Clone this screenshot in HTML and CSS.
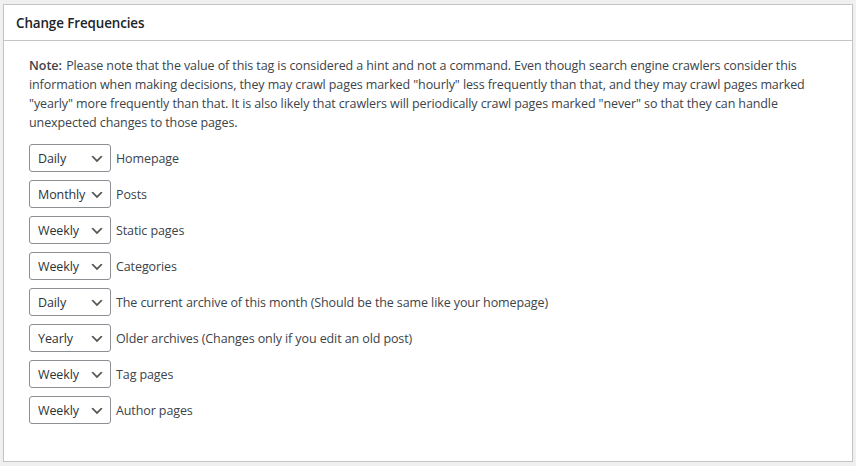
FILE: index.html
```html
<!DOCTYPE html>
<html lang="en">
<head>
<meta charset="utf-8">
<title>Change Frequencies</title>
<link rel="stylesheet" href="styles.css">
</head>
<body>
<div class="postbox">
  <div class="postbox-header"><h2 class="hndle">Change Frequencies</h2></div>
  <div class="inside">
    <p class="note"><b class="note-label">Note:</b> Please note that the value of this tag is considered a hint and not a command. Even though search engine crawlers consider this information when making decisions, they may crawl pages marked "hourly" less frequently than that, and they may crawl pages marked "yearly" more frequently than that. It is also likely that crawlers will periodically crawl pages marked "never" so that they can handle unexpected changes to those pages.</p>
    <ul class="freq-list">
      <li class="freq-row"><select class="freq-select"><option>Always</option><option>Hourly</option><option selected>Daily</option><option>Weekly</option><option>Monthly</option><option>Yearly</option><option>Never</option></select><label class="freq-label">Homepage</label></li>
      <li class="freq-row"><select class="freq-select"><option>Always</option><option>Hourly</option><option>Daily</option><option>Weekly</option><option selected>Monthly</option><option>Yearly</option><option>Never</option></select><label class="freq-label">Posts</label></li>
      <li class="freq-row"><select class="freq-select"><option>Always</option><option>Hourly</option><option>Daily</option><option selected>Weekly</option><option>Monthly</option><option>Yearly</option><option>Never</option></select><label class="freq-label">Static pages</label></li>
      <li class="freq-row"><select class="freq-select"><option>Always</option><option>Hourly</option><option>Daily</option><option selected>Weekly</option><option>Monthly</option><option>Yearly</option><option>Never</option></select><label class="freq-label">Categories</label></li>
      <li class="freq-row"><select class="freq-select"><option>Always</option><option>Hourly</option><option selected>Daily</option><option>Weekly</option><option>Monthly</option><option>Yearly</option><option>Never</option></select><label class="freq-label">The current archive of this month (Should be the same like your homepage)</label></li>
      <li class="freq-row"><select class="freq-select"><option>Always</option><option>Hourly</option><option>Daily</option><option>Weekly</option><option>Monthly</option><option selected>Yearly</option><option>Never</option></select><label class="freq-label">Older archives (Changes only if you edit an old post)</label></li>
      <li class="freq-row"><select class="freq-select"><option>Always</option><option>Hourly</option><option>Daily</option><option selected>Weekly</option><option>Monthly</option><option>Yearly</option><option>Never</option></select><label class="freq-label">Tag pages</label></li>
      <li class="freq-row"><select class="freq-select"><option>Always</option><option>Hourly</option><option>Daily</option><option selected>Weekly</option><option>Monthly</option><option>Yearly</option><option>Never</option></select><label class="freq-label">Author pages</label></li>
    </ul>
  </div>
</div>
</body>
</html>
```

FILE: styles.css
```css
html, body {
  margin: 0;
  padding: 0;
  background: #f0f0f1;
}
body {
  padding: 4px 3px 0 3px;
  font-family: "Open Sans", "Noto Sans", sans-serif;
  font-size: 12.5px;
  letter-spacing: -0.1px;
  color: #3c434a;
}
.postbox {
  background: #fff;
  border: 1px solid #c3c4c7;
  box-shadow: 0 1px 1px rgba(0,0,0,0.04);
  height: 456px;
  box-sizing: content-box;
}
.postbox-header {
  border-bottom: 1px solid #c3c4c7;
  display: flex;
  align-items: center;
  padding: 1px 12px 0 12px;
  box-sizing: border-box;
  height: 36px;
}
.hndle {
  margin: 0;
  font-size: 13.4px;
  letter-spacing: -0.1px;
  font-weight: 600;
  color: #1d2327;
  line-height: 1.4;
}
.inside {
  padding: 15px 25px 12px 25px;
}
.note {
  margin: 0 0 12px 0;
  line-height: 19px;
}
.note-label {
  font-weight: 600;
  letter-spacing: normal;
  margin-right: 1px;
}
.freq-list {
  list-style: none;
  margin: 0;
  padding: 0;
  display: flex;
  flex-direction: column;
  gap: 8px;
}
.freq-row {
  display: flex;
  align-items: center;
  gap: 5px;
  height: 28px;
}
.freq-select {
  -webkit-appearance: none;
  appearance: none;
  width: 82px;
  height: 28px;
  box-sizing: border-box;
  border: 1px solid #8c8f94;
  border-radius: 3px;
  background: #fff url("data:image/svg+xml;charset=US-ASCII,%3Csvg%20width%3D%2220%22%20height%3D%2220%22%20xmlns%3D%22http%3A%2F%2Fwww.w3.org%2F2000%2Fsvg%22%3E%3Cpath%20d%3D%22M5%206l5%205%205-5%202%201-7%207-7-7%202-1z%22%20fill%3D%22%23555%22%2F%3E%3C%2Fsvg%3E") no-repeat right 5px top 55%;
  background-size: 16px 16px;
  padding: 2px 20px 0 8px;
  font-family: "Open Sans", "Noto Sans", sans-serif;
  font-size: 12.5px;
  letter-spacing: -0.1px;
  color: #2c3338;
  line-height: 24px;
  margin: 0;
}
.freq-label {
  line-height: 19px;
  color: #3c434a;
}
```
